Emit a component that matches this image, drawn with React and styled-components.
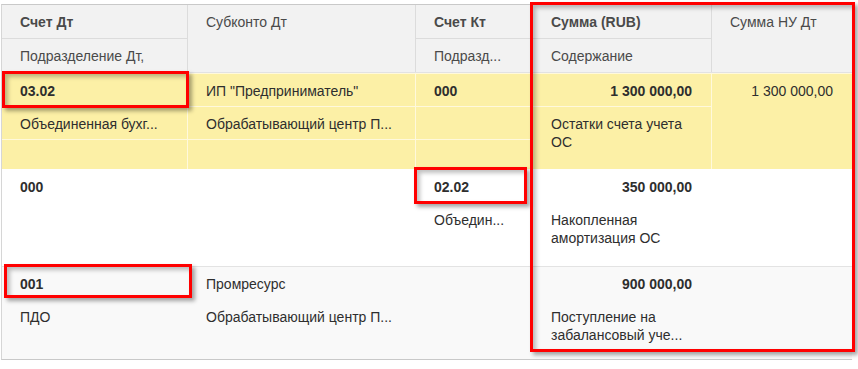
import React from 'react';
import styled, { createGlobalStyle } from 'styled-components';

const GlobalStyle = createGlobalStyle`
  body {
    margin: 0;
    background: #fff;
    font-family: 'Liberation Sans', Arial, sans-serif;
  }
`;

const COLUMNS = '185px 227px 116px 178px 1fr';

const Page = styled.div`
  position: relative;
  width: 858px;
  height: 369px;
  padding: 4px 6px 0 1px;
  box-sizing: border-box;
  overflow: hidden;
`;

const Table = styled.div`
  width: 851px;
  border-top: 1px solid #c9c9c9;
  border-bottom: 1px solid #c9c9c9;
  border-left: 1px solid #d6d6d6;
  box-sizing: border-box;
`;

const Header = styled.div`
  display: grid;
  grid-template-columns: ${COLUMNS};
  grid-template-rows: 33px 33px;
  gap: 1px;
  background: #dcdcdc;
  border-bottom: 1px solid #e2e2e2;
`;

const HeadCell = styled.div`
  grid-row: span ${p => p.$span || 1};
  background: #f2f2f2;
  color: #4a4a4a;
  font-size: 14px;
  line-height: 18px;
  font-weight: ${p => (p.$bold ? 'bold' : 'normal')};
  padding: 8px 18px 0;
  white-space: nowrap;
  overflow: hidden;
`;

const Row = styled.div`
  display: grid;
  grid-template-columns: ${COLUMNS};
  grid-template-rows: 32px 32px 1fr;
  gap: 1px;
  height: ${p => p.$height}px;
  background: ${p => p.$line};
  border-top: 1px solid ${p => p.$border || 'transparent'};
`;

const Cell = styled.div`
  grid-row: span ${p => p.$span || 1};
  background: ${p => p.$bg};
  color: #2e2e2e;
  font-size: 14px;
  line-height: 18px;
  font-weight: ${p => (p.$bold ? 'bold' : 'normal')};
  text-align: ${p => (p.$right ? 'right' : 'left')};
  padding: 8px ${p => (p.$right ? 19 : 18)}px 0 18px;
  white-space: ${p => (p.$wrap ? 'normal' : 'nowrap')};
  overflow: hidden;
`;

const Marker = styled.div`
  position: absolute;
  left: ${p => p.$x}px;
  top: ${p => p.$y}px;
  width: ${p => p.$w}px;
  height: ${p => p.$h}px;
  box-sizing: border-box;
  border: 3px solid #f00;
  box-shadow: 3px 3px 4px rgba(0, 0, 0, 0.35), inset 3px 3px 4px rgba(0, 0, 0, 0.25);
  pointer-events: none;
`;

const rows = [
  {
    height: 95,
    bg: '#fcf0a6',
    line: '#fff9dc',
    dt: ['03.02', 'Объединенная бухг...'],
    sub: ['ИП "Предприниматель"', 'Обрабатывающий центр П...'],
    kt: ['000', ''],
    sum: '1 300 000,00',
    text: 'Остатки счета учета ОС',
    nu: '1 300 000,00',
  },
  {
    height: 96,
    bg: '#fff',
    line: '#fff',
    dt: ['000', ''],
    sub: ['', ''],
    kt: ['02.02', 'Объедин...'],
    sum: '350 000,00',
    text: 'Накопленная амортизация ОС',
    nu: '',
  },
  {
    height: 92,
    bg: '#f9f9f9',
    line: '#f9f9f9',
    border: '#e3e3e3',
    dt: ['001', 'ПДО'],
    sub: ['Промресурс', 'Обрабатывающий центр П...'],
    kt: ['', ''],
    sum: '900 000,00',
    text: 'Поступление на забалансовый уче...',
    nu: '',
  },
];

const markers = [
  { x: 2, y: 71, w: 187, h: 37 },
  { x: 414, y: 167, w: 113, h: 37 },
  { x: 4, y: 264, w: 188, h: 34 },
  { x: 530, y: 2, w: 325, h: 350 },
];

export default function App() {
  return (
    <Page>
      <GlobalStyle />
      <Table>
        <Header>
          <HeadCell $bold>Счет Дт</HeadCell>
          <HeadCell $span={2}>Субконто Дт</HeadCell>
          <HeadCell $bold>Счет Кт</HeadCell>
          <HeadCell $bold>Сумма (RUB)</HeadCell>
          <HeadCell $span={2}>Сумма НУ Дт</HeadCell>
          <HeadCell>Подразделение Дт,</HeadCell>
          <HeadCell>Подразд...</HeadCell>
          <HeadCell>Содержание</HeadCell>
        </Header>
        {rows.map((r, i) => (
          <Row key={i} $height={r.height} $line={r.line} $border={r.border}>
            {/* first line */}
            <Cell $bg={r.bg} $bold>{r.dt[0]}</Cell>
            <Cell $bg={r.bg}>{r.sub[0]}</Cell>
            <Cell $bg={r.bg} $bold>{r.kt[0]}</Cell>
            <Cell $bg={r.bg} $bold $right>{r.sum}</Cell>
            <Cell $bg={r.bg} $right $span={3}>{r.nu}</Cell>
            {/* second line */}
            <Cell $bg={r.bg}>{r.dt[1]}</Cell>
            <Cell $bg={r.bg}>{r.sub[1]}</Cell>
            <Cell $bg={r.bg}>{r.kt[1]}</Cell>
            <Cell $bg={r.bg} $wrap $span={2}>{r.text}</Cell>
            {/* third line */}
            <Cell $bg={r.bg} />
            <Cell $bg={r.bg} />
            <Cell $bg={r.bg} />
          </Row>
        ))}
      </Table>
      {markers.map((m, i) => (
        <Marker key={i} $x={m.x} $y={m.y} $w={m.w} $h={m.h} />
      ))}
    </Page>
  );
}
